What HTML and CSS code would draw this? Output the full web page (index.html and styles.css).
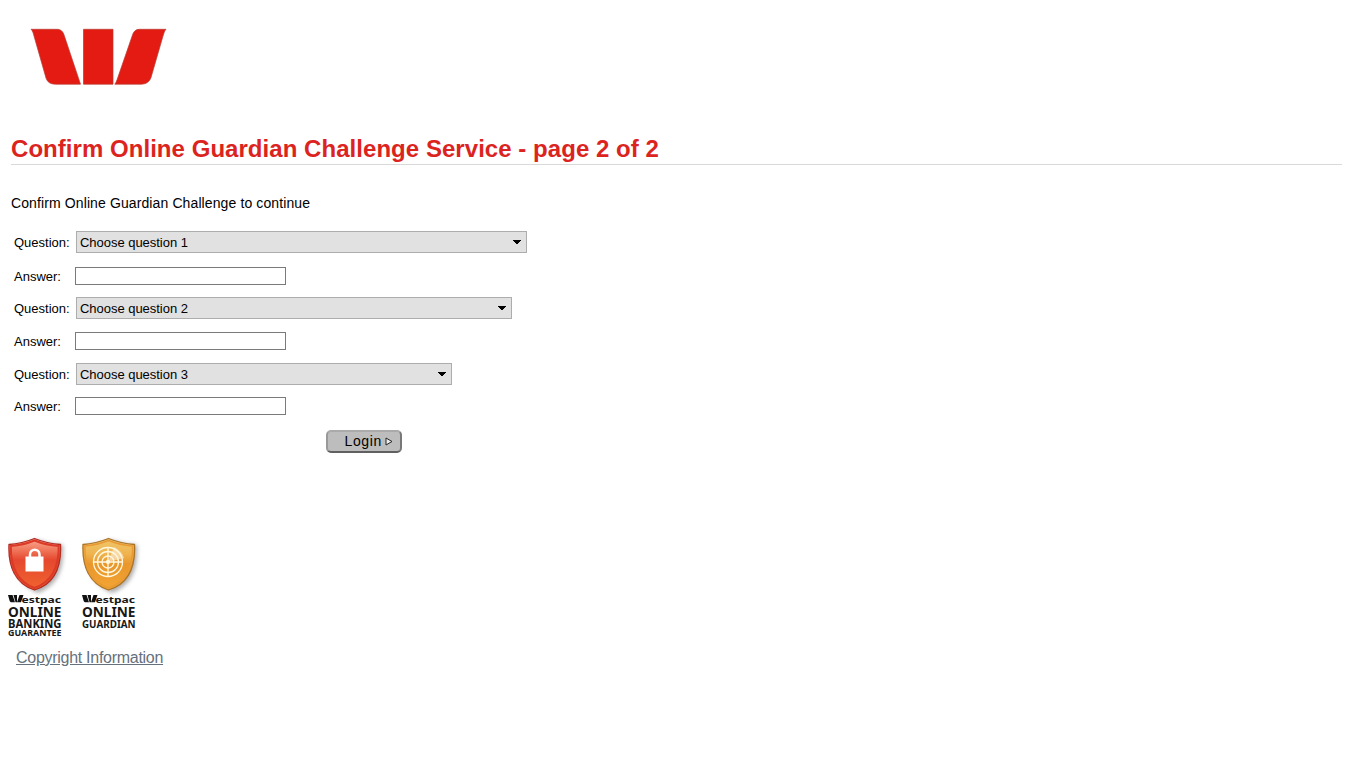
FILE: index.html
```html
<!DOCTYPE html>
<html lang="en">
<head>
<meta charset="utf-8">
<title>Static layout mockup</title>
<link rel="stylesheet" href="styles.css">
</head>
<body>
<header class="brand">
  <svg class="logo" width="137" height="58" viewBox="0 0 137 58">
    <g fill="#e31b12" stroke="#b73a30" stroke-width=".7">
      <path d="M1 1.300H27C31 1.300 33 3.500 34.400 8L50.500 56.200H25.500C20 56.200 17.500 54 16 50L4 8C3.300 5 2.500 2.500 1 1.300Z"/>
      <path d="M53.500 1.300H83V56.200H53.500Z"/>
      <path d="M136 1.300H109C105.500 1.300 103.500 4 102.500 7L88 49C87 52 86 55 84.800 56.200H111C116 56.200 119.500 54 121 49.500L133 8C134 5 134.500 3 136 1.300Z"/>
    </g>
  </svg>
</header>
<main>
  <h1 class="title">Confirm Online Guardian Challenge Service - page 2 of 2</h1>
  <p class="intro">Confirm Online Guardian Challenge to continue</p>
  <section class="rows">
    <div class="row choice"><span class="label">Question:</span><div class="select wide"><span>Choose question 1</span><svg class="arrow" width="8" height="4"><path d="M0 0H8V1H7V2H6V3H5V4H3V3H2V2H1V1H0Z"/></svg></div></div>
    <div class="row answer first"><span class="label">Answer:</span><div class="field"></div></div>
    <div class="row choice second"><span class="label">Question:</span><div class="select medium"><span>Choose question 2</span><svg class="arrow" width="8" height="4"><path d="M0 0H8V1H7V2H6V3H5V4H3V3H2V2H1V1H0Z"/></svg></div></div>
    <div class="row answer"><span class="label">Answer:</span><div class="field"></div></div>
    <div class="row choice third"><span class="label">Question:</span><div class="select narrow"><span>Choose question 3</span><svg class="arrow" width="8" height="4"><path d="M0 0H8V1H7V2H6V3H5V4H3V3H2V2H1V1H0Z"/></svg></div></div>
    <div class="row answer last"><span class="label">Answer:</span><div class="field"></div></div>
  </section>
  <div class="login"><span>Login</span><svg width="8" height="9"><path d="M1 1L7 4.500L1 8Z" fill="#eee" stroke="#222"/></svg></div>
</main>
<footer>
  <div class="badges">
    <svg width="62" height="104" viewBox="0 0 62 104">
      <defs>
        <linearGradient id="red" x1="0" y1="0" x2="0" y2="1"><stop offset="0" stop-color="#f9ab94"/><stop offset=".25" stop-color="#ef7054"/><stop offset=".42" stop-color="#e5482f"/><stop offset="1" stop-color="#f0642e"/></linearGradient>
        <filter id="shade" x="-20%" y="-20%" width="150%" height="150%"><feGaussianBlur stdDeviation="2"/></filter>
      </defs>
      <path d="M4 10Q17 9 30 5Q41 9 55 10C56 34 50 50 30 58C12 50 4 34 4 10Z" fill="#777" opacity=".6" filter="url(#shade)"/>
      <path d="M1 9.500Q14 8.500 26.500 3.500Q39 8.500 52.500 9.500C53.500 31 47 49 26.500 55C7 49 0 31 1 9.500Z" fill="url(#red)" stroke="#b02b22" stroke-width="1.300"/>
      <path d="M2.800 11Q15.500 10 26.500 5.500Q37.500 10 50.700 11C51 31 44 47 26.500 53C9.500 47 2.500 31 2.800 11Z" fill="none" stroke="#dc3926" stroke-width="2"/>
      <path d="M17.500 21.500H35.500V36.500H17.500Z" fill="#fff"/><path d="M22 23V19.500C22 13 31.500 13 31.500 19.500V23" fill="none" stroke="#fff" stroke-width="2.500"/>
      <path d="M0 60H4.500L7 67.300H3Q2 67.300 1.500 65.500ZM5.500 60H9V67.300H7.500ZM11.500 60H15.500L13 67.300H9Z" fill="#111"/>
      <g class="badge-text"><text x="13.500" y="68" font-size="9" textLength="39.500" lengthAdjust="spacingAndGlyphs">estpac</text><text x="0" y="81.500" font-size="13.500" textLength="53.500" lengthAdjust="spacingAndGlyphs">ONLINE</text><text x="0" y="92.500" font-size="11.500" textLength="53.500" lengthAdjust="spacingAndGlyphs">BANKING</text><text x="0" y="100.800" font-size="8.200" textLength="53.500" lengthAdjust="spacingAndGlyphs">GUARANTEE</text></g>
    </svg>
    <svg width="62" height="104" viewBox="0 0 62 104">
      <defs><linearGradient id="gold" x1="0" y1="0" x2="0" y2="1"><stop offset="0" stop-color="#efc76c"/><stop offset=".3" stop-color="#efb34e"/><stop offset=".5" stop-color="#e9962b"/><stop offset="1" stop-color="#f3a634"/></linearGradient></defs>
      <path d="M4 10Q17 9 30 5Q41 9 55 10C56 34 50 50 30 58C12 50 4 34 4 10Z" fill="#777" opacity=".6" filter="url(#shade)"/>
      <path d="M1 9.500Q14 8.500 26.500 3.500Q39 8.500 52.500 9.500C53.500 31 47 49 26.500 55C7 49 0 31 1 9.500Z" fill="url(#gold)" stroke="#a97328" stroke-width="1.300"/>
      <path d="M2.800 11Q15.500 10 26.500 5.500Q37.500 10 50.700 11C51 31 44 47 26.500 53C9.500 47 2.500 31 2.800 11Z" fill="none" stroke="#e99a35" stroke-width="1.500"/>
      <path d="M26 27L32 12Q40 16 42 23Z" fill="#fff" opacity=".5"/>
      <g fill="none" stroke="#fff8df" stroke-width="1.300"><circle cx="26" cy="27" r="14.500"/><circle cx="26" cy="27" r="10.500"/><circle cx="26" cy="27" r="6"/><circle cx="26" cy="27" r="1.500" fill="#fff8df"/><path d="M11 27H41M26 12V42"/></g>
      <path d="M0 60H4.500L7 67.300H3Q2 67.300 1.500 65.500ZM5.500 60H9V67.300H7.500ZM11.500 60H15.500L13 67.300H9Z" fill="#111"/>
      <g class="badge-text"><text x="13.500" y="68" font-size="9" textLength="39.500" lengthAdjust="spacingAndGlyphs">estpac</text><text x="0" y="81.500" font-size="13.500" textLength="53.500" lengthAdjust="spacingAndGlyphs">ONLINE</text><text x="0" y="92.500" font-size="10" textLength="53.500" lengthAdjust="spacingAndGlyphs">GUARDIAN</text></g>
    </svg>
  </div>
  <span class="copyright">Copyright Information</span>
</footer>
</body>
</html>
```
FILE: styles.css
```css
* { box-sizing: border-box; }
body { margin: 0; background: #fff; color: #000; font-family: "Liberation Sans", Arial, sans-serif; }
.brand { height: 135px; padding: 28px 0 0 30px; }
.logo { display: block; }
.title { margin: 0 24px 0 11px; height: 30px; border-bottom: 1px solid #d9d9d9; color: #dc241f; font-size: 24px; line-height: 28px; letter-spacing: .045px; white-space: nowrap; }
.intro { margin: 30px 0 0 11px; height: 16px; font-size: 14px; line-height: 16px; letter-spacing: .11px; }
.rows { padding: 20px 0 0 14px; font-size: 13px; }
.row { display: flex; align-items: center; }
.label { width: 61px; }
.choice { height: 22px; }
.choice .label { width: 62px; }
.answer { height: 18px; margin-top: 13px; }
.first { margin-top: 14px; }
.second { margin-top: 12px; }
.third { margin-top: 13px; }
.last { margin-top: 12px; }
.select { display: flex; align-items: center; justify-content: space-between; height: 22px; padding: 0 5px 0 3px; border: 1px solid #adadad; background: #e1e1e1; letter-spacing: -.03px; }
.wide { width: 451px; }
.medium { width: 436px; }
.narrow { width: 376px; }
.arrow { shape-rendering: crispEdges; }
.field { width: 211px; height: 18px; border: 1px solid #7a7a7a; background: #fff; }
.login { display: flex; align-items: center; justify-content: flex-end; gap: 3px; width: 76px; height: 23px; margin: 15px 0 0 326px; padding: 0 7px 1px 0; border: 2px solid; border-color: #aaa #787878 #606060 #999; border-radius: 5px; background: #bdbdbd; font-size: 14px; letter-spacing: .65px; }
footer { padding: 82px 0 0 8px; }
.badges { display: flex; gap: 12px; height: 104px; }
.badge-text { fill: #171717; font-family: "Noto Sans", sans-serif; font-weight: 700; }
.copyright { display: inline-block; margin: 9px 0 0 8px; color: #66717b; font-size: 16px; line-height: 20px; letter-spacing: -.28px; text-decoration: underline; }
```
